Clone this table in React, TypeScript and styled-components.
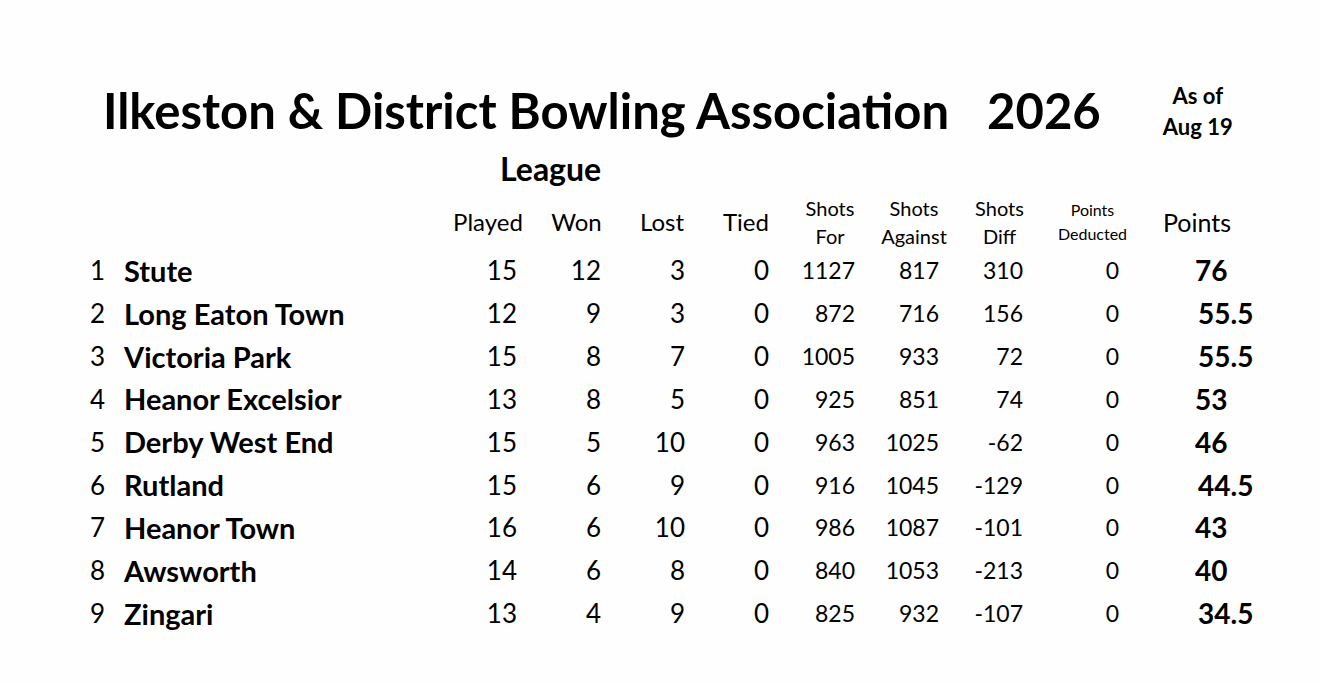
import React from "react";
import styled, { createGlobalStyle } from "styled-components";

const Global = createGlobalStyle`
  html, body { margin: 0; padding: 0; background: #fefefe; }
  body { font-family: Lato, "Open Sans", sans-serif; color: #000; }
`;

const Page = styled.div`
  width: 1320px;
  height: 683px;
  background: #fefefe;
  padding: 80px 0 0 0;
  box-sizing: border-box;
`;

const TitleRow = styled.div`
  display: flex;
  align-items: flex-start;
  padding-left: 103px;
`;

const Title = styled.h1`
  margin: 0;
  font-size: 49px;
  font-weight: 700;
  line-height: 60px;
  white-space: nowrap;
`;

const Year = styled.span`
  margin-left: 38px;
`;

const AsOf = styled.div`
  margin-left: 62px;
  font-size: 22px;
  font-weight: 700;
  line-height: 31px;
  text-align: center;
`;

const League = styled.div`
  padding-left: 500px;
  font-size: 32px;
  font-weight: 700;
  line-height: 36px;
  margin-top: 9px;
`;

const Table = styled.div`
  display: grid;
  grid-template-columns: 50px 333px 90px 87px 84px 84px 84px 84px 87px 99px 110px;
  margin-left: 60px;
  margin-top: 8px;
`;

const HeadCell = styled.div<{ $size: number; $lh?: number }>`
  height: 54px;
  display: flex;
  flex-direction: column;
  align-items: center;
  justify-content: center;
  font-size: ${(p) => p.$size}px;
  line-height: ${(p) => p.$lh ?? 28}px;
  white-space: nowrap;
`;

const Cell = styled.div<{ $align?: "left" | "right"; $pad?: number; $bold?: boolean; $size?: number }>`
  height: 42.85px;
  display: flex;
  align-items: center;
  justify-content: ${(p) => (p.$align === "left" ? "flex-start" : "flex-end")};
  padding-left: ${(p) => (p.$align === "left" ? p.$pad ?? 0 : 0)}px;
  padding-right: ${(p) => (p.$align === "left" ? 0 : p.$pad ?? 0)}px;
  font-size: ${(p) => p.$size ?? 26}px;
  font-weight: ${(p) => (p.$bold ? 700 : 400)};
  white-space: nowrap;
`;

type Row = [number, string, number, number, number, number, number, number, number, number, string];

const rows: Row[] = [
  [1, "Stute", 15, 12, 3, 0, 1127, 817, 310, 0, "76"],
  [2, "Long Eaton Town", 12, 9, 3, 0, 872, 716, 156, 0, "55.5"],
  [3, "Victoria Park", 15, 8, 7, 0, 1005, 933, 72, 0, "55.5"],
  [4, "Heanor Excelsior", 13, 8, 5, 0, 925, 851, 74, 0, "53"],
  [5, "Derby West End", 15, 5, 10, 0, 963, 1025, -62, 0, "46"],
  [6, "Rutland", 15, 6, 9, 0, 916, 1045, -129, 0, "44.5"],
  [7, "Heanor Town", 16, 6, 10, 0, 986, 1087, -101, 0, "43"],
  [8, "Awsworth", 14, 6, 8, 0, 840, 1053, -213, 0, "40"],
  [9, "Zingari", 13, 4, 9, 0, 825, 932, -107, 0, "34.5"],
];

const numPads = [16, 19, 19, 19, 17, 17, 20, 23];
const numSizes = [26, 26, 26, 26, 23, 23, 23, 23];

export default function App() {
  return (
    <Page>
      <Global />
      <TitleRow>
        <Title>
          Ilkeston &amp; District Bowling Association<Year>2026</Year>
        </Title>
        <AsOf>
          As of
          <br />
          Aug 19
        </AsOf>
      </TitleRow>
      <League>League</League>
      <Table>
        <HeadCell $size={24} />
        <HeadCell $size={24} />
        <HeadCell $size={24}>Played</HeadCell>
        <HeadCell $size={24}>Won</HeadCell>
        <HeadCell $size={24}>Lost</HeadCell>
        <HeadCell $size={24}>Tied</HeadCell>
        <HeadCell $size={20}>
          <span>Shots</span>
          <span>For</span>
        </HeadCell>
        <HeadCell $size={20}>
          <span>Shots</span>
          <span>Against</span>
        </HeadCell>
        <HeadCell $size={20}>
          <span>Shots</span>
          <span>Diff</span>
        </HeadCell>
        <HeadCell $size={16} $lh={24}>
          <span>Points</span>
          <span>Deducted</span>
        </HeadCell>
        <HeadCell $size={25}>Points</HeadCell>
        {rows.map((r) => (
          <React.Fragment key={r[0]}>
            <Cell $pad={5}>{r[0]}</Cell>
            <Cell $align="left" $pad={14} $bold $size={29}>
              {r[1]}
            </Cell>
            {r.slice(2, 10).map((v, i) => (
              <Cell key={i} $pad={numPads[i]} $size={numSizes[i]}>
                {v}
              </Cell>
            ))}
            <Cell $align="left" $pad={r[10].length > 2 ? 56 : 53} $bold $size={28}>
              {r[10]}
            </Cell>
          </React.Fragment>
        ))}
      </Table>
    </Page>
  );
}
